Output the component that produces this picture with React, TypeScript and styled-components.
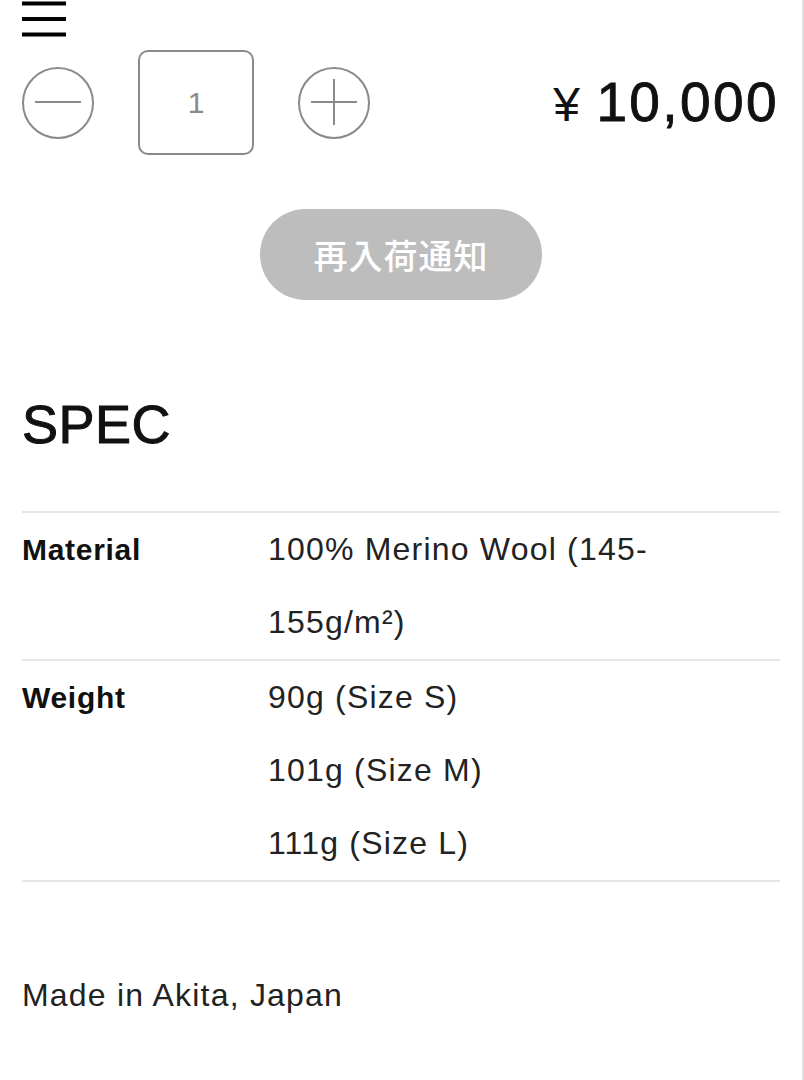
import React from "react";
import styled, { createGlobalStyle } from "styled-components";

const Global = createGlobalStyle`
  html, body { margin: 0; padding: 0; background: #fff; }
  body { font-family: "Liberation Sans", Arial, "Noto Sans CJK JP", sans-serif; color: #111; }
  * { box-sizing: border-box; }
`;

const Page = styled.div`
  width: 804px;
  min-height: 1080px;
  padding: 0 22px;
  border-right: 2px solid #e2e2e2;
`;

const MenuButton = styled.button`
  display: block;
  padding: 0;
  margin: 0;
  border: none;
  background: none;
  width: 44px;
  height: 38px;
`;

const QtyRow = styled.div`
  display: flex;
  align-items: center;
  justify-content: space-between;
  margin-top: 12px;
  height: 105px;
`;

const Stepper = styled.div`
  display: flex;
  align-items: center;
  gap: 44px;
`;

const RoundBtn = styled.button`
  width: 72px;
  height: 72px;
  padding: 0;
  border: none;
  background: none;
  display: flex;
  align-items: center;
  justify-content: center;
`;

const QtyBox = styled.div`
  width: 116px;
  height: 105px;
  border: 2px solid #8a8a8a;
  border-radius: 10px;
  display: flex;
  align-items: center;
  justify-content: center;
  font-size: 30px;
  color: #8a8a8a;
`;

const Price = styled.div`
  font-size: 55px;
  letter-spacing: 2.4px;
  -webkit-text-stroke: 0.9px #111;
  color: #111;
  line-height: 1;
  margin-right: 1px;
`;

const Yen = styled.span`
  font-size: 48px;
  margin-right: 14px;
  -webkit-text-stroke: 0;
`;

const NotifyWrap = styled.div`
  display: flex;
  justify-content: center;
  margin-top: 54px;
`;

const NotifyButton = styled.button`
  width: 282px;
  height: 91px;
  border: none;
  border-radius: 46px;
  background: #bdbdbd;
  color: #fff;
  font-family: "Noto Sans CJK JP", sans-serif;
  font-weight: 500;
  font-size: 34px;
  letter-spacing: 1px;
`;

const SpecTitle = styled.h2`
  margin: 97px 0 0;
  font-size: 54px;
  font-weight: 400;
  -webkit-text-stroke: 1px #111;
  line-height: 1;
  letter-spacing: 0.5px;
  color: #111;
`;

const SpecTable = styled.div`
  margin-top: 60px;
  border-top: 2px solid #e6e6e6;
`;

const SpecRow = styled.div`
  display: grid;
  grid-template-columns: 246px 1fr;
  border-bottom: 2px solid #e6e6e6;
`;

const Label = styled.div`
  font-size: 30px;
  font-weight: 700;
  letter-spacing: 0.7px;
  line-height: 73px;
  color: #111;
`;

const Values = styled.div`
  font-size: 32px;
  letter-spacing: 1.2px;
  line-height: 73px;
  color: #222;
`;

const Line = styled.div``;

const MadeIn = styled.p`
  margin: 95px 0 0;
  font-size: 32px;
  letter-spacing: 1.2px;
  color: #222;
`;

const Circle = ({ plus }: { plus?: boolean }) => (
  <svg width="72" height="72" viewBox="0 0 72 72" fill="none" stroke="#8a8a8a" strokeWidth="2">
    <circle cx="36" cy="36" r="35" />
    <line x1="13" y1="35" x2="59" y2="35" />
    {plus && <line x1="36" y1="12" x2="36" y2="58" />}
  </svg>
);

export default function App() {
  return (
    <>
      <Global />
      <Page>
        <MenuButton aria-label="menu">
          <svg width="44" height="38" viewBox="0 0 44 38" stroke="#000" strokeWidth="4">
            <line x1="0" y1="3.5" x2="44" y2="3.5" />
            <line x1="0" y1="19" x2="44" y2="19" />
            <line x1="0" y1="34.5" x2="44" y2="34.5" />
          </svg>
        </MenuButton>
        <QtyRow>
          <Stepper>
            <RoundBtn aria-label="decrease">
              <Circle />
            </RoundBtn>
            <QtyBox>1</QtyBox>
            <RoundBtn aria-label="increase">
              <Circle plus />
            </RoundBtn>
          </Stepper>
          <Price>
            <Yen>¥</Yen>10,000
          </Price>
        </QtyRow>
        <NotifyWrap>
          <NotifyButton>再入荷通知</NotifyButton>
        </NotifyWrap>
        <SpecTitle>SPEC</SpecTitle>
        <SpecTable>
          <SpecRow>
            <Label>Material</Label>
            <Values>
              <Line>100% Merino Wool (145-155g/m²)</Line>
            </Values>
          </SpecRow>
          <SpecRow>
            <Label>Weight</Label>
            <Values>
              <Line>90g (Size S)</Line>
              <Line>101g (Size M)</Line>
              <Line>111g (Size L)</Line>
            </Values>
          </SpecRow>
        </SpecTable>
        <MadeIn>Made in Akita, Japan</MadeIn>
      </Page>
    </>
  );
}
